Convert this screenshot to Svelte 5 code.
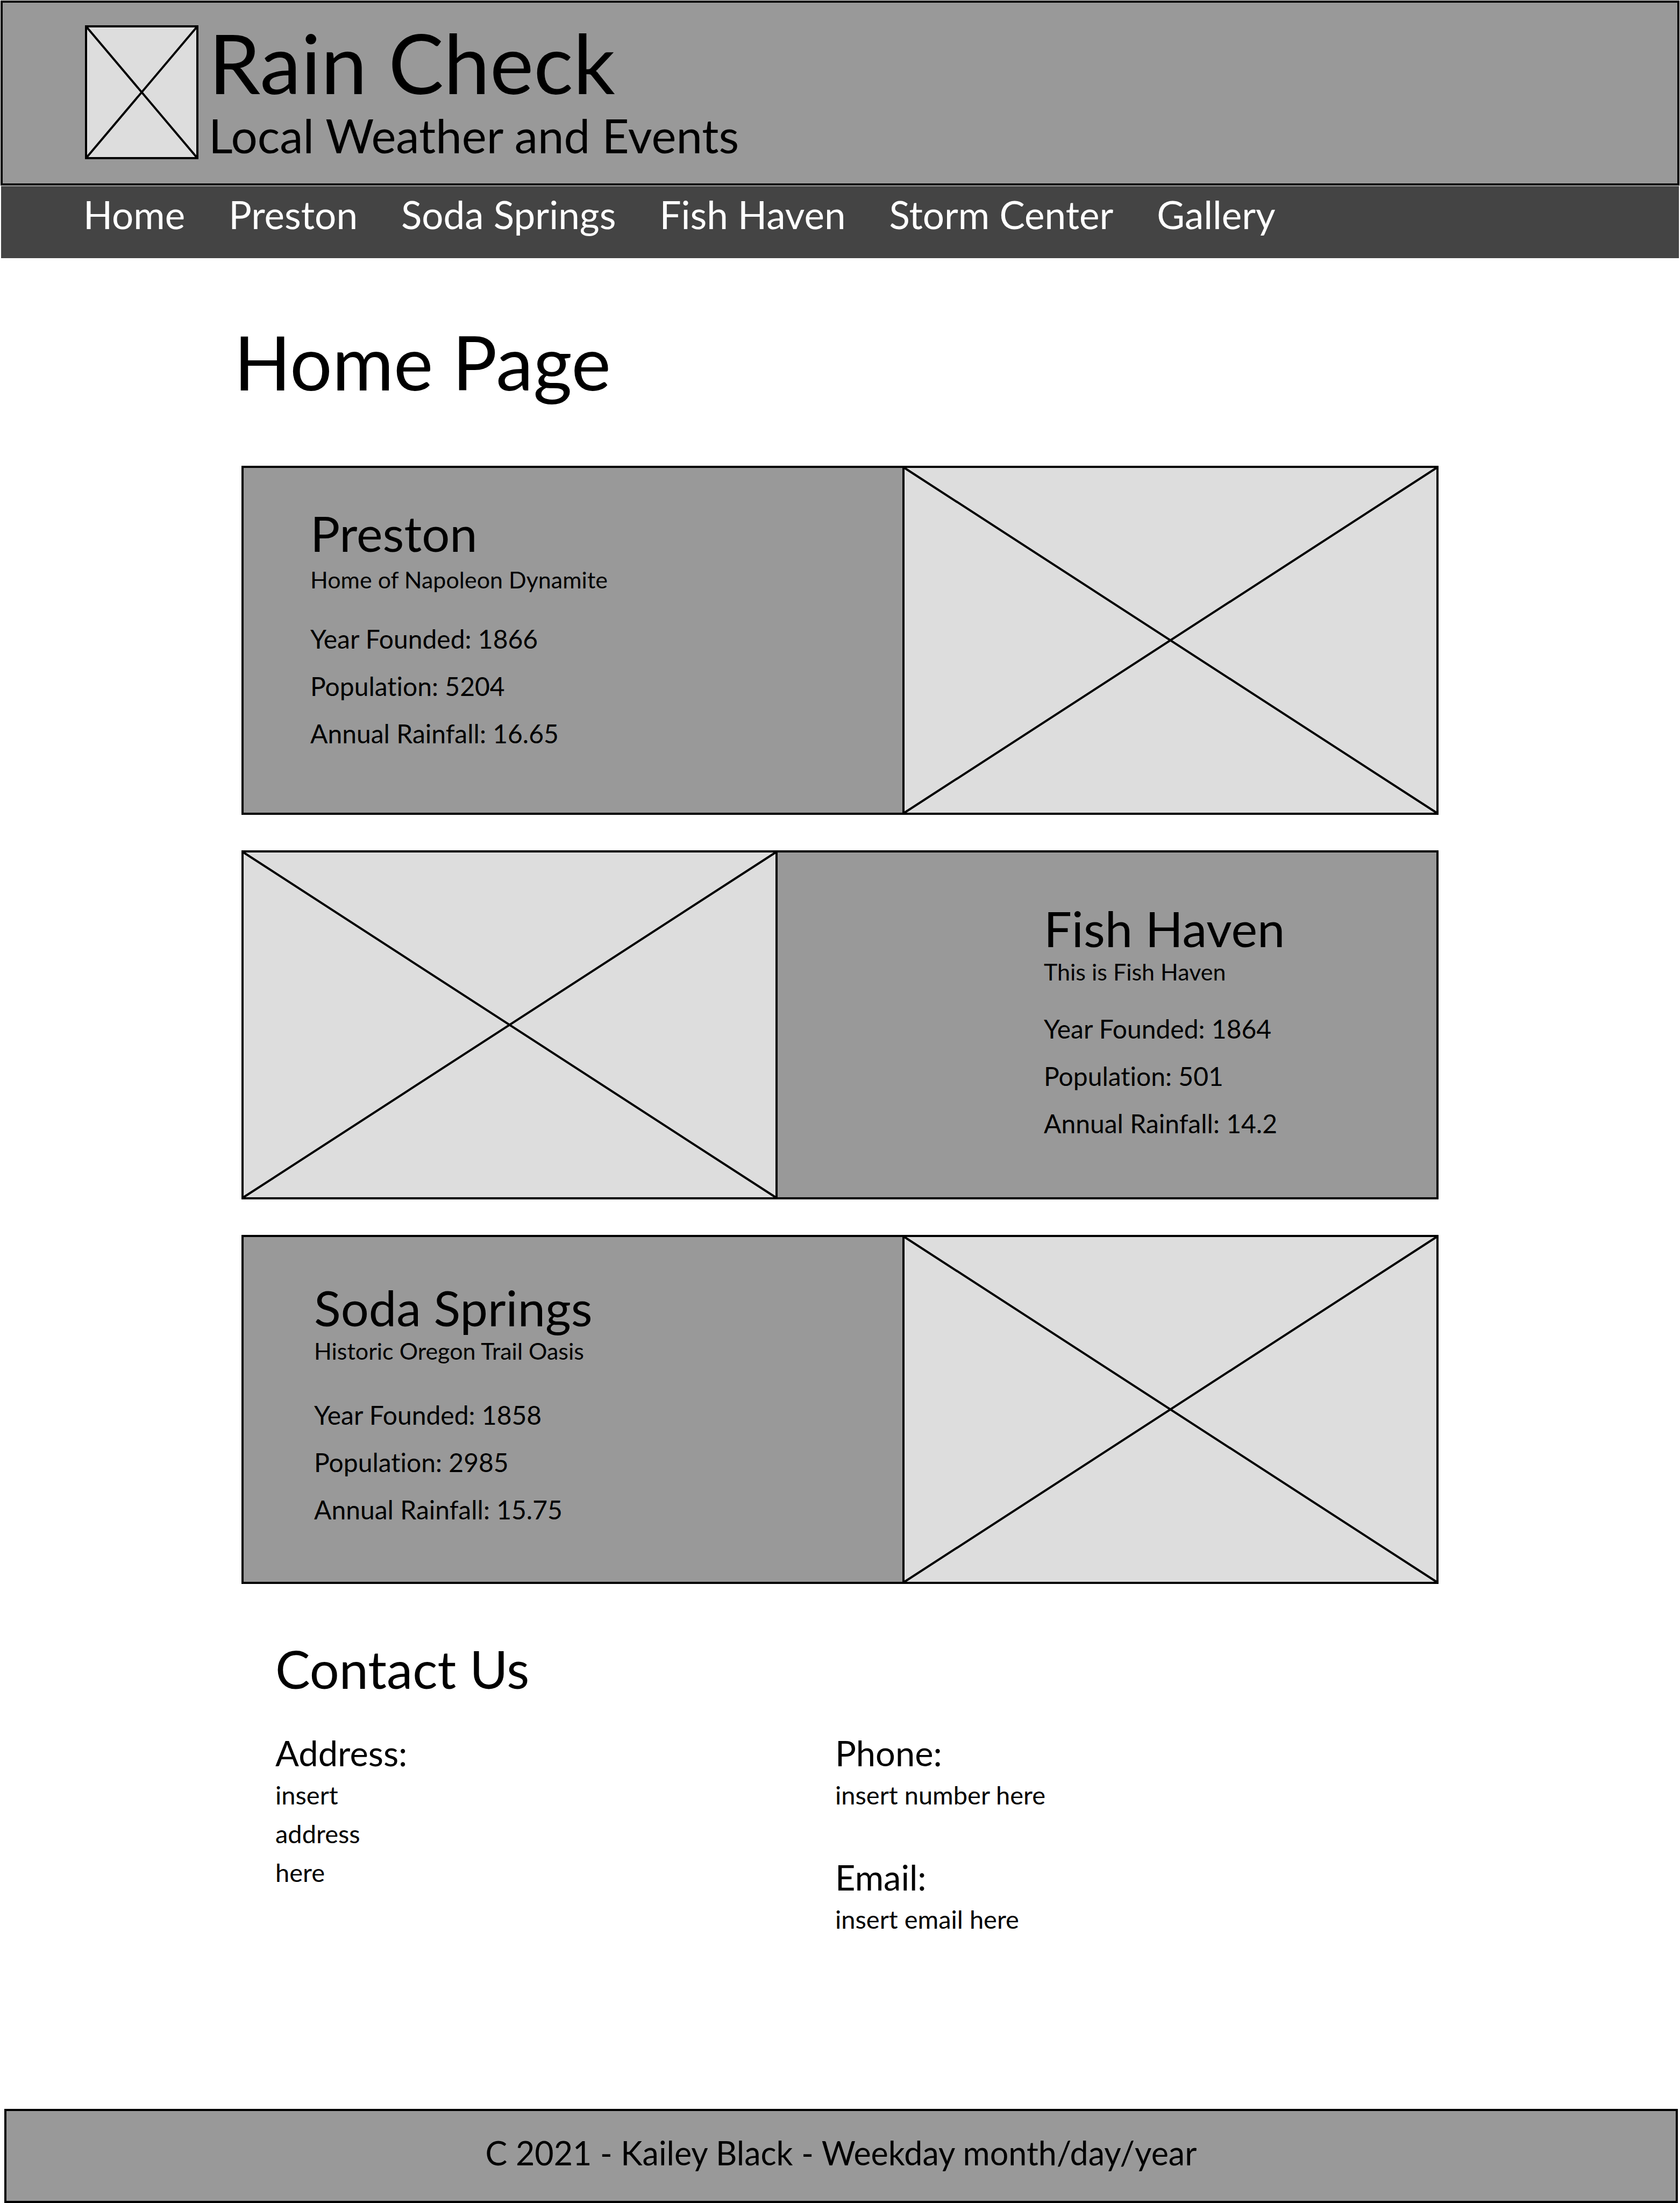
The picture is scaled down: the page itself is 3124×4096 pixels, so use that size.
<script>
  const links = ['Home', 'Preston', 'Soda Springs', 'Fish Haven', 'Storm Center', 'Gallery'];

  const towns = [
    { id: 'preston', name: 'Preston', motto: 'Home of Napoleon Dynamite', founded: '1866', population: '5204', rainfall: '16.65' },
    { id: 'fish-haven', name: 'Fish Haven', motto: 'This is Fish Haven', founded: '1864', population: '501', rainfall: '14.2', flipped: true },
    { id: 'soda-springs', name: 'Soda Springs', motto: 'Historic Oregon Trail Oasis', founded: '1858', population: '2985', rainfall: '15.75' }
  ];
</script>

<div class="page">
  <header class="banner">
    <svg class="logo" viewBox="0 0 211 249" role="img" aria-label="Logo placeholder">
      <rect x="2" y="2" width="207" height="245" />
      <path d="M2 2 209 247M209 2 2 247" />
    </svg>
    <div class="brand">
      <p class="site-name">Rain Check</p>
      <p class="tagline">Local Weather and Events</p>
    </div>
  </header>

  <nav class="menu" aria-label="Main">
    {#each links as link}
      <a href={'#' + link.toLowerCase().replace(' ', '-')}>{link}</a>
    {/each}
  </nav>

  <main>
    <h1>Home Page</h1>

    <div class="towns">
      {#each towns as town}
        <article class="card {town.id}" class:flipped={town.flipped} id={town.id}>
          <div class="details">
            <h2>{town.name}</h2>
            <p class="motto">{town.motto}</p>
            <ul>
              <li>Year Founded: {town.founded}</li>
              <li>Population: {town.population}</li>
              <li>Annual Rainfall: {town.rainfall}</li>
            </ul>
          </div>
          <svg class="photo" viewBox="0 0 989 641" preserveAspectRatio="none" role="img" aria-label="{town.name} photo placeholder">
            <path d="M0 0 989 641M989 0 0 641" />
          </svg>
        </article>
      {/each}
    </div>

    <section class="contact">
      <h2>Contact Us</h2>
      <div class="columns">
        <div class="entry">
          <h3>Address:</h3>
          <address>insert<br />address<br />here</address>
        </div>
        <div class="stack">
          <div class="entry">
            <h3>Phone:</h3>
            <p>insert number here</p>
          </div>
          <div class="entry">
            <h3>Email:</h3>
            <p>insert email here</p>
          </div>
        </div>
      </div>
    </section>
  </main>

  <footer>
    <p>C 2021 - Kailey Black - Weekday month/day/year</p>
  </footer>
</div>

<style>
  :global(body) {
    margin: 0;
    background: #fff;
  }

  .page {
    box-sizing: border-box;
    min-height: 100vh;
    padding-top: 1px;
    display: flex;
    flex-direction: column;
    color: #000;
    font-family: Lato, "Noto Sans", sans-serif;
    font-variant-ligatures: none;
  }

  h1, h2, h3, p, ul, address {
    margin: 0;
    padding: 0;
    font-weight: 400;
    font-style: normal;
  }

  ul {
    list-style: none;
  }

  svg {
    display: block;
    stroke: #000;
    stroke-width: 4px;
  }

  .banner {
    display: flex;
    gap: 19px;
    margin: 0 1px;
    padding: 42px 153px 45px;
    border: 4px solid #000;
    background: #999;
  }

  .logo {
    width: 211px;
    height: 249px;
    flex: none;
    fill: #ddd;
  }

  .brand {
    display: flex;
    flex-direction: column;
    gap: 23px;
  }

  .site-name {
    font-size: 154px;
    line-height: 138px;
  }

  .tagline {
    font-size: 87px;
    line-height: 88px;
  }

  .menu {
    display: flex;
    flex-wrap: wrap;
    column-gap: 81px;
    margin: 1px 2px 0;
    padding: 9px 153px 37px;
    background: #444;
  }

  .menu a {
    color: #fff;
    font-size: 71px;
    line-height: 88px;
    text-decoration: none;
  }

  h1 {
    margin: 113px 0;
    padding: 0 435px;
    font-size: 139px;
    line-height: 160px;
  }

  .towns {
    display: flex;
    flex-direction: column;
    gap: 66px;
    padding: 0 449px;
  }

  .card {
    display: grid;
    grid-template-columns: 1225fr 993fr;
    border: 4px solid #000;
    background: #999;
  }

  .card.flipped {
    grid-template-columns: 993fr 1225fr;
  }

  .flipped .details {
    order: 1;
  }

  .photo {
    box-sizing: border-box;
    width: 100%;
    height: auto;
    border-left: 4px solid #000;
    background: #ddd;
    fill: none;
  }

  .flipped .photo {
    border-left: 0;
    border-right: 4px solid #000;
  }

  .card h2 {
    font-size: 92px;
    line-height: 110px;
  }

  .motto {
    font-size: 43px;
    line-height: 52px;
  }

  .card li {
    font-size: 48px;
    line-height: 88px;
  }

  .preston .details {
    padding: 66px 0 0 124px;
  }

  .preston h2 {
    margin-bottom: 6px;
  }

  .preston ul {
    margin-top: 40px;
  }

  .fish-haven .details {
    padding: 86px 0 0 495px;
  }

  .fish-haven ul {
    margin-top: 36px;
  }

  .soda-springs .details {
    padding: 76px 0 0 131px;
  }

  .soda-springs ul {
    margin-top: 49px;
  }

  .contact {
    margin: 100px 0 79px;
    padding: 0 449px 0 512px;
  }

  .contact h2 {
    margin-bottom: 58px;
    font-size: 97px;
    line-height: 116px;
  }

  .columns {
    display: grid;
    grid-template-columns: 1041fr 1122fr;
  }

  .stack {
    display: flex;
    flex-direction: column;
    gap: 77px;
  }

  .entry {
    font-size: 47px;
    line-height: 72px;
  }

  .entry h3 {
    margin-bottom: 2px;
    font-size: 65px;
    line-height: 80px;
  }

  footer {
    margin: auto 4px 0 8px;
    padding: 34px 40px 45px;
    border: 4px solid #000;
    background: #999;
    font-size: 61px;
    line-height: 88px;
    text-align: center;
  }
</style>
